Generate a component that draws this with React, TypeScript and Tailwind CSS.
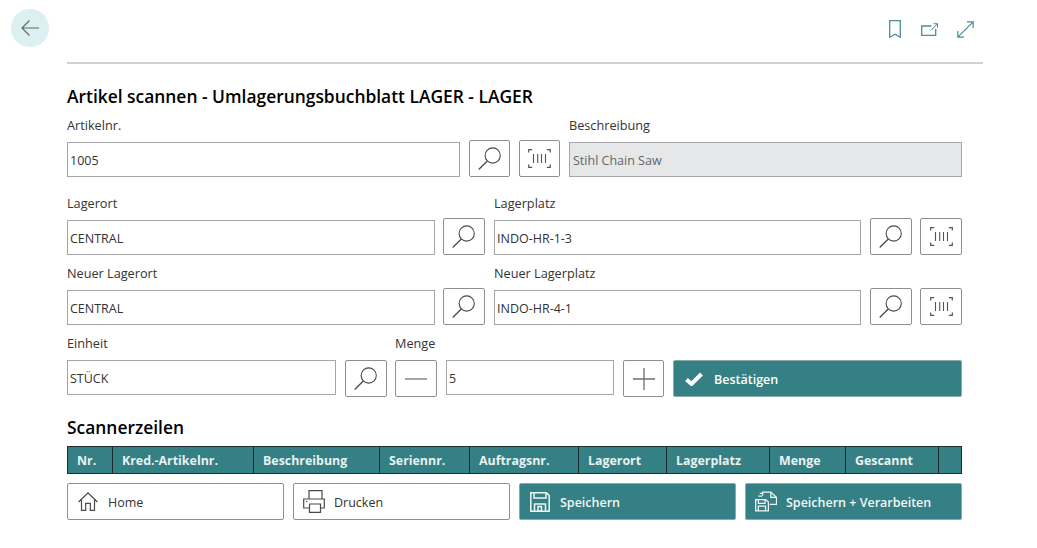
import type { ReactNode } from "react";

const SearchIcon = () => (
  <svg width="26" height="26" viewBox="0 0 26 26" fill="none" stroke="#4a4a4a" strokeWidth="1.1">
    <circle cx="15.7" cy="9.5" r="7.6" />
    <path d="M10.300 15 L1.700 23.500" strokeWidth="1.300" />
  </svg>
);

const BarcodeIcon = () => (
  <svg width="23" height="19" viewBox="0 0 23 19" fill="none" stroke="#555" strokeWidth="1.200">
    <path d="M.7 3.500V.7h3.500M18.800.7h3.500v2.800M.7 15.500v2.800h3.500M18.800 18.300h3.500v-2.800" />
    <path d="M5.500 5v9M9.700 5v9M13.500 5v9M17.500 5v9" strokeWidth="1.100" />
  </svg>
);

const IconButton = ({ children, className = "w-[42px]" }: { children: ReactNode; className?: string }) => (
  <button className={`flex h-[37px] shrink-0 items-center justify-center rounded-[2px] border border-[#8f8f8f] bg-white ${className}`}>
    {children}
  </button>
);

const Input = ({ value, className = "", disabled = false }: { value: string; className?: string; disabled?: boolean }) => (
  <div
    className={`flex h-[35px] shrink-0 items-center border border-[#a6a6a6] pt-[3px] text-[12.500px] ${
      disabled ? "bg-[#e6e7e8] pl-[3px] text-[#666666]" : "bg-white pl-[2px] text-[#333333]"
    } ${className}`}
  >
    {value}
  </div>
);

const Label = ({ children, className = "" }: { children: ReactNode; className?: string }) => (
  <div className={`mb-[8px] h-[17px] text-[12.700px] leading-[17px] text-[#333333] ${className}`}>{children}</div>
);

const LookupField = ({ label, value, barcode = false }: { label: string; value: string; barcode?: boolean }) => (
  <div>
    <Label>{label}</Label>
    <div className="mt-[-2px] flex items-end">
      <Input value={value} className={barcode ? "mr-[9px] w-[367px]" : "mr-[8px] w-[368px]"} />
      <IconButton>
        <SearchIcon />
      </IconButton>
      {barcode && (
        <IconButton className="ml-[8px] w-[42px]">
          <BarcodeIcon />
        </IconButton>
      )}
    </div>
  </div>
);

const columns = [
  { name: "Nr.", width: "w-[45px]" },
  { name: "Kred.-Artikelnr.", width: "w-[141px]" },
  { name: "Beschreibung", width: "w-[126px]" },
  { name: "Seriennr.", width: "w-[90px]" },
  { name: "Auftragsnr.", width: "w-[109px]" },
  { name: "Lagerort", width: "w-[88px]" },
  { name: "Lagerplatz", width: "w-[103px]" },
  { name: "Menge", width: "w-[76px]" },
  { name: "Gescannt", width: "w-[93px]" },
  { name: "", width: "flex-1" },
];

const PageIcons = () => (
  <div className="flex h-[18px] items-center gap-[19px] text-[#4a8f97]">
    <svg className="mr-[1px]" width="12" height="18" viewBox="0 0 12 18" fill="none" stroke="currentColor" strokeWidth="1.300">
      <path d="M.7.7h10.600v16.500L6 14.200.7 17.200z" />
    </svg>
    <svg width="17" height="13" viewBox="0 0 17 13" fill="none" stroke="currentColor" strokeWidth="1.300">
      <path d="M10.500 3H.7v9.300h14V6" />
      <path d="M10 7.500l6-6.500M12.500.7h4v4" strokeWidth="1" />
    </svg>
    <svg width="17" height="17" viewBox="0 0 17 17" fill="none" stroke="currentColor" strokeWidth="1.200">
      <path d="M.8 16.200L16.200.8M10 .8h6.200V7M.8 10v6.200H7" />
    </svg>
  </div>
);

const ActionButton = ({
  icon,
  label,
  primary = false,
}: {
  icon: ReactNode;
  label: string;
  primary?: boolean;
}) => (
  <button
    className={`flex h-[37px] w-[217px] items-center gap-[9px] rounded-[2px] border pl-[9px] text-[12.500px] ${
      primary
        ? "border-[#8aa9ac] bg-[#358084] font-semibold text-[#f2f7f7]"
        : "border-[#8f8f8f] bg-white text-[#333333]"
    }`}
  >
    <span className="flex w-[22px] shrink-0 justify-center">{icon}</span>
    <span className="pt-[3px]">{label}</span>
  </button>
);

export default function App() {
  return (
    <div className="h-[548px] w-[1037px] overflow-hidden bg-white font-['Open_Sans','Noto_Sans',sans-serif]">
      <div className="relative px-[67px] pt-[8px]">
        <button className="absolute left-[11px] top-[9px] flex h-[38px] w-[38px] items-center justify-center rounded-full bg-[#dceff1]">
          <svg width="18" height="16" viewBox="0 0 18 16" fill="none" stroke="#666" strokeWidth="1.200">
            <path d="M18 8H1M8.500.5L1 8l7.500 7.500" />
          </svg>
        </button>

        <div className="box-border flex h-[56px] w-[916px] items-start justify-end border-b-2 border-[#d2d0d4] pr-[9px] pt-[12px]">
          <PageIcons />
        </div>

        <div className="w-[895px]">
          <h1 className="mt-[20px] h-[24px] text-[17.400px] font-semibold leading-[24px] text-black">
            Artikel scannen - Umlagerungsbuchblatt LAGER - LAGER
          </h1>

          <div className="mt-[9px] flex items-end gap-[9px]">
            <div className="w-[393px]">
              <Label>Artikelnr.</Label>
              <Input value="1005" className="w-[393px]" />
            </div>
            <IconButton className="w-[41px]">
              <SearchIcon />
            </IconButton>
            <IconButton className="w-[41px]">
              <BarcodeIcon />
            </IconButton>
            <div className="w-[393px]">
              <Label>Beschreibung</Label>
              <Input value="Stihl Chain Saw" disabled className="w-[393px]" />
            </div>
          </div>

          <div className="mt-[18px] flex gap-[9px]">
            <LookupField label="Lagerort" value="CENTRAL" />
            <LookupField label="Lagerplatz" value="INDO-HR-1-3" barcode />
          </div>

          <div className="mt-[10px] flex gap-[9px]">
            <LookupField label="Neuer Lagerort" value="CENTRAL" />
            <LookupField label="Neuer Lagerplatz" value="INDO-HR-4-1" barcode />
          </div>

          <div className="mt-[10px] flex items-start">
            <div className="mr-[9px]">
              <Label>Einheit</Label>
              <Input value="STÜCK" className="w-[269px]" />
            </div>
            <div className="mr-[8px] pt-[25px]">
              <IconButton>
                <SearchIcon />
              </IconButton>
            </div>
            <div>
              <Label>Menge</Label>
              <div className="flex items-start gap-[9px]">
                <IconButton>
                  <svg width="22" height="2" viewBox="0 0 22 2">
                    <path d="M0 1h22" stroke="#888" strokeWidth="1.500" />
                  </svg>
                </IconButton>
                <Input value="5" className="w-[168px]" />
                <IconButton className="w-[41px]">
                  <svg width="22" height="22" viewBox="0 0 22 22" fill="none" stroke="#6f6f6f" strokeWidth="1.300">
                    <path d="M0 11h22M11 0v22" />
                  </svg>
                </IconButton>
                <button className="flex h-[37px] w-[289px] items-center gap-[11px] rounded-[2px] border border-[#8aa9ac] bg-[#358084] pl-[11px] text-[12.500px] font-semibold text-white">
                  <svg width="18" height="14" viewBox="0 0 18 14" fill="none" stroke="#fff" strokeWidth="4">
                    <path d="M1.500 7.500l5 4.500L16.500 2" />
                  </svg>
                  <span className="pt-[3px]">Bestätigen</span>
                </button>
              </div>
            </div>
          </div>

          <h2 className="mt-[18px] h-[24px] text-[17.400px] font-semibold leading-[24px] text-black">Scannerzeilen</h2>

          <div className="mt-[7px] flex h-[28px] items-stretch border border-[#1d2b2d] bg-[#358084]">
            {columns.map((col, i) => (
              <div
                key={i}
                className={`flex items-center pl-[9px] pt-[2px] text-[12.400px] font-bold text-[#e9f1f1] ${col.width} ${
                  i < columns.length - 1 ? "border-r border-[#1d2b2d]" : ""
                }`}
              >
                {col.name}
              </div>
            ))}
          </div>

          <div className="mt-[9px] flex gap-[9px]">
            <ActionButton
              label="Home"
              icon={
                <svg width="20" height="19" viewBox="0 0 20 19" fill="none" stroke="#4a4a4a" strokeWidth="1.200">
                  <path d="M.6 10L10 .9 19.400 10M3.500 8v10.400h4.200v-7h4.600v7h4.200V8" />
                </svg>
              }
            />
            <ActionButton
              label="Drucken"
              icon={
                <svg width="22" height="23" viewBox="0 0 22 23" fill="none" stroke="#4a4a4a" strokeWidth="1.200">
                  <path d="M6 9V.7h13V9M6.500 18H.7V9h20.600v9h-3.800" />
                  <path d="M6.500 14h11v8.300h-11zM3 11.500h1.500" />
                </svg>
              }
            />
            <ActionButton
              primary
              label="Speichern"
              icon={
                <svg width="20" height="20" viewBox="0 0 20 20" fill="none" stroke="#eef5f5" strokeWidth="1.500">
                  <path d="M.8.8h15.700l2.700 2.700v15.700H.8z" />
                  <path d="M4 .8v5.200h12V.8M4.500 19.200v-7.200h11v7.200M8 14.500h3.500v4.700H8z" />
                </svg>
              }
            />
            <ActionButton
              primary
              label="Speichern + Verarbeiten"
              icon={
                <svg width="23" height="21" viewBox="0 0 23 21" fill="none" stroke="#f2f7f7" strokeWidth="1.300">
                  <path d="M8 4.500V.7h8.500l6 5.500v7.300h-7" />
                  <path d="M16.500.7v5.500h6M5 2h3M3.500 5h4" />
                  <path d="M.7 8.500h10.500l2.800 2.500v9.300H.7z" />
                  <path d="M3.500 8.500v4h7v-4M3.500 20.300v-5h7.500v5" />
                </svg>
              }
            />
          </div>
        </div>
      </div>
    </div>
  );
}
